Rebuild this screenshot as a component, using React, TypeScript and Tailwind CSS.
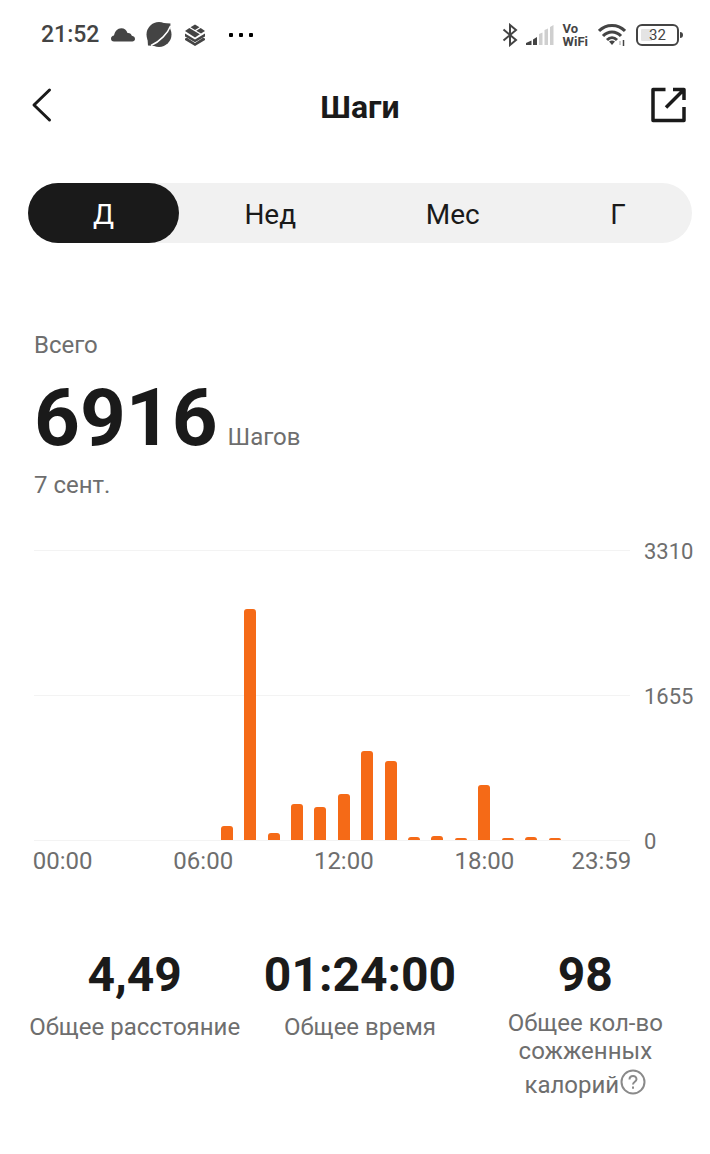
import { useState } from "react";

type Range = { id: string; label: string; width: string };

const RANGES: Range[] = [
  { id: "day", label: "Д", width: "w-[151px]" },
  { id: "week", label: "Нед", width: "flex-1" },
  { id: "month", label: "Мес", width: "flex-1" },
  { id: "year", label: "Г", width: "w-[148px]" },
];

const MAX_STEPS = 3310;

// steps per hour, 00:00 – 23:59
const HOURS = [0, 0, 0, 0, 0, 0, 0, 165, 2642, 80, 411, 377, 525, 1016, 902, 34, 46, 23, 628, 23, 34, 18, 0, 0];

const TIME_LABELS: Record<number, string> = { 0: "00:00", 6: "06:00", 12: "12:00", 18: "18:00", 23: "23:59" };

function StatusBar() {
  return (
    <div className="flex h-[70px] items-center justify-between pr-[9px] pl-[13px] text-[#444]">
      <div className="flex items-center">
        <span className="pt-px text-[23px] font-medium">21:52</span>
        <svg className="ml-3 h-4 w-6" viewBox="0 0 24 16" fill="currentColor">
          <path d="M3 14.500 C1 14.500 0 13.200 0 11.700 C0 9.800 1.500 8.800 3 8.600 C4 4.200 6.500 1.300 10.300 1.300 C13.500 1.300 15.500 3.300 16.500 6 C19 5.800 20.300 7 20.800 8.800 C22.800 9.200 24 10.200 24 12 C24 13.500 22.800 14.500 21.300 14.500Z" />
        </svg>
        <svg className="ml-[10px] size-7" viewBox="0 0 28 28" fill="currentColor">
          <circle cx="14" cy="13.500" r="12.500" />
          <path d="M18 2 L25.500 2.500 L25 10Z" />
          <path d="M2.500 17 L3 24.500 L10 25Z" />
          <path d="M25.500 5 C23 12 15 20.500 6 24.500" fill="none" stroke="#fff" strokeWidth="1.500" />
        </svg>
        <svg className="ml-[11px] h-6 w-[22px]" viewBox="0 0 22 24" fill="currentColor">
          <path d="M11 1.500 L15.500 4.200 L11 7 L6.500 4.200Z" />
          <path d="M5.300 5 L15.800 11.300 L11 14.500 L1 8Z" />
          <path d="M16.700 5 L21 8 L17 10.500 L12.200 7.700Z" />
          <path d="M1 10.500 L11 16.500 L21 10.500 V13.500 L11 19.200 L1 13.500Z" />
          <path d="M1 15.500 L3 14.800 L11 20 L19 14.800 L21 15.500 V17 L11 23 L1 17Z" />
        </svg>
        <svg className="ml-[22px] h-1 w-[26px] text-black" viewBox="0 0 26 4" fill="currentColor">
          <rect x="1" width="4" height="4" rx="1" />
          <rect x="11" width="4" height="4" rx="1" />
          <rect x="21" width="4" height="4" rx="1" />
        </svg>
      </div>

      <div className="flex items-center">
        <svg className="h-6 w-4" viewBox="0 0 16 24" fill="none" stroke="currentColor" strokeWidth="2">
          <path d="M1.500 6.500 L14 17 L8 22 V2 L14 7 L1.500 17.500" />
        </svg>
        <svg className="ml-2 h-5 w-7" viewBox="0 0 28 20" fill="currentColor">
          <path d="M0 20 V18 L5.500 15.500 V20Z" />
          <path d="M7 20 V14.500 L11 12 V20Z" />
          <path d="M13 20 V9 L16.500 7.500 V20Z M18.500 20 V5 L22 3.500 V20Z M24 20 V2 L27.500 0 V20Z" fill="#cfcfcf" />
        </svg>
        <span className="ml-[9px] flex flex-col text-[13px] leading-[13px] font-bold">
          <span>Vo</span>
          <span>WiFi</span>
        </span>
        <svg className="ml-[10px] h-6 w-7" viewBox="0 0 28 24" fill="none" stroke="currentColor" strokeWidth="3">
          <path d="M1 8 C8 .500 20 .500 27 8" />
          <path d="M5 13 C10 7.500 18 7.500 23 13" />
          <path d="M9 17 C12 14 16 14 19 17" />
          <path d="M11 18.500 L14 22 L17 18.500 C15 17 13 17 11 18.500Z" fill="currentColor" stroke="none" />
          <path d="M22 22 V18" stroke="#cfcfcf" strokeWidth="2" />
          <path d="M25.500 17 V23" strokeWidth="1.500" />
        </svg>
        <div className="ml-[10px] flex items-center">
          <div className="flex h-[22px] w-[43px] items-center justify-center rounded-md border-2 border-current bg-linear-to-r from-[#e4e4e4] from-35% to-white to-35% bg-clip-content p-[3px] text-[15px]">
            32
          </div>
          <div className="ml-px h-[6px] w-[3px] rounded-r-sm bg-current" />
        </div>
      </div>
    </div>
  );
}

function Header() {
  return (
    <header className="flex h-[70px] items-center justify-between">
      <button aria-label="Назад" className="w-11">
        <svg className="h-9 w-7" viewBox="0 0 28 36" fill="none" stroke="#1a1a1a" strokeWidth="3" strokeLinecap="round">
          <path d="M21.500 3 L6 18 L21.500 33" strokeLinejoin="round" />
        </svg>
      </button>
      <h1 className="pt-[3px] text-[32px] leading-10 font-bold">Шаги</h1>
      <button aria-label="Поделиться" className="flex w-11 justify-end pr-[6px]">
        <svg className="size-9" viewBox="0 0 36 36" fill="none" stroke="#1a1a1a" strokeWidth="3.500">
          <path d="M15.500 2.500 H3 V33.500 H34 V20" strokeLinejoin="round" />
          <path d="M23 2.500 H34 V13 M34 2.500 L16 20.500" strokeLinejoin="round" />
        </svg>
      </button>
    </header>
  );
}

function StepsChart() {
  return (
    <div className="mt-[49px] flex text-[#6e6e6e]">
      <div className="ml-[6px] min-w-0 flex-1">
        <div className="grid h-[291px] grid-cols-1 grid-rows-1">
          <div className="col-start-1 row-start-1 flex flex-col justify-between">
            <div className="h-px bg-[#f3f3f3]" />
            <div className="h-px bg-[#f3f3f3]" />
            <div className="h-px bg-[#f3f3f3]" />
          </div>
          <div className="col-start-1 row-start-1 flex items-end px-[17px] pb-px">
            {HOURS.map((steps, hour) => (
              <div key={hour} className="flex h-full flex-1 items-end justify-center">
                <div className="w-3 rounded-t-[3px] bg-[#f56a17]" style={{ height: `${(steps / MAX_STEPS) * 100}%` }} />
              </div>
            ))}
          </div>
        </div>
        <div className="mt-1 flex h-8 items-center px-[17px] text-2xl">
          {HOURS.map((_, hour) => (
            <div key={hour} className="flex w-0 flex-1 justify-center whitespace-nowrap">
              {TIME_LABELS[hour]}
            </div>
          ))}
        </div>
      </div>
      <div className="-mt-[14px] ml-[14px] flex h-[322px] w-12 flex-col justify-between text-[22px] leading-8">
        <span>3310</span>
        <span>1655</span>
        <span>0</span>
      </div>
    </div>
  );
}

function Stat({ value, children }: { value: string; children: React.ReactNode }) {
  return (
    <div className="flex flex-col items-center text-center">
      <div className="text-5xl leading-[56px] font-bold">{value}</div>
      {children}
    </div>
  );
}

export default function App() {
  const [range, setRange] = useState("day");

  return (
    <main className="min-h-screen bg-white pr-[18px] pb-14 pl-7 font-[Roboto,sans-serif] text-[#1a1a1a]">
      <StatusBar />
      <Header />

      <nav className="mt-[43px] flex h-[60px] rounded-full bg-[#f1f1f1]">
        {RANGES.map((r) => (
          <button
            key={r.id}
            onClick={() => setRange(r.id)}
            className={`${r.width} rounded-full pt-1 text-[28px] ${range === r.id ? "bg-[#1a1a1a] text-white" : ""}`}
          >
            {r.label}
          </button>
        ))}
      </nav>

      <section className="mt-[86px] pl-[6px] text-2xl text-[#6e6e6e]">
        <p className="leading-8">Всего</p>
        <p className="mt-[9px] flex items-baseline gap-[10px]">
          <span className="text-[80px] leading-[96px] font-bold text-[#1a1a1a]">6916</span>
          <span className="leading-8">Шагов</span>
        </p>
        <p className="mt-[3px] leading-8">7 сент.</p>
      </section>

      <StepsChart />

      <section className="mt-[70px] grid grid-cols-3 gap-3">
        <Stat value="4,49">
          <p className="mt-2 text-2xl whitespace-nowrap text-[#6e6e6e]">Общее расстояние</p>
        </Stat>
        <Stat value="01:24:00">
          <p className="mt-2 text-2xl whitespace-nowrap text-[#6e6e6e]">Общее время</p>
        </Stat>
        <Stat value="98">
          <div className="mt-[6px] text-2xl leading-7 whitespace-nowrap text-[#6e6e6e]">
            <p>Общее кол-во</p>
            <p>сожженных</p>
            <p className="flex items-center justify-center leading-10">
              калорий
              <button aria-label="Подробнее" className="pb-[6px]">
                <svg className="ml-px size-[26px]" viewBox="0 0 26 26" fill="none" stroke="#8a8a8a" strokeWidth="2">
                  <circle cx="13" cy="13" r="11.500" />
                  <path d="M9.500 10.500 C9.500 5.800 16.500 5.800 16.500 10.300 C16.500 12.800 13 12.800 13 15.500" />
                  <path d="M13 17.500 V19.800" />
                </svg>
              </button>
            </p>
          </div>
        </Stat>
      </section>
    </main>
  );
}
